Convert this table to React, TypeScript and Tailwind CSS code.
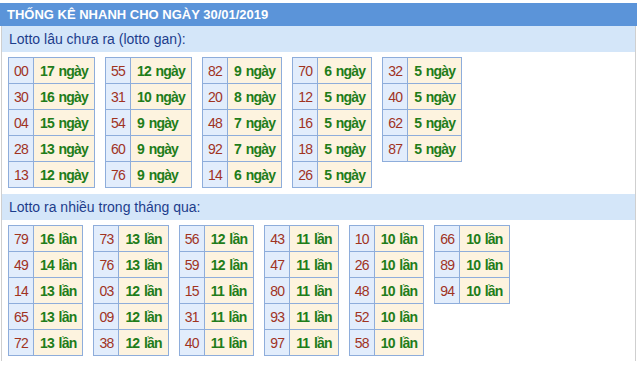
// Lotto quick stats panel: header bar, two titled sections of small number tables.

type Pair = [string, number];

const ganTables: Pair[][] = [
  [["00", 17], ["30", 16], ["04", 15], ["28", 13], ["13", 12]],
  [["55", 12], ["31", 10], ["54", 9], ["60", 9], ["76", 9]],
  [["82", 9], ["20", 8], ["48", 7], ["92", 7], ["14", 6]],
  [["70", 6], ["12", 5], ["16", 5], ["18", 5], ["26", 5]],
  [["32", 5], ["40", 5], ["62", 5], ["87", 5]],
];

const nhieuTables: Pair[][] = [
  [["79", 16], ["49", 14], ["14", 13], ["65", 13], ["72", 13]],
  [["73", 13], ["76", 13], ["03", 12], ["09", 12], ["38", 12]],
  [["56", 12], ["59", 12], ["15", 11], ["31", 11], ["40", 11]],
  [["43", 11], ["47", 11], ["80", 11], ["93", 11], ["97", 11]],
  [["10", 10], ["26", 10], ["48", 10], ["52", 10], ["58", 10]],
  [["66", 10], ["89", 10], ["94", 10]],
];

function StatTable({ rows, unit }: { rows: Pair[]; unit: string }) {
  return (
    <table className="border-collapse self-start text-[14px] tracking-[-0.8px] [word-spacing:1.5px]">
      <tbody>
        {rows.map(([num, count]) => (
          <tr key={num} className="h-[26px]">
            <td className="border border-[#8eaddb] bg-[#e2edfc] px-[5px] text-[#a0331f] leading-none">
              {num}
            </td>
            <td className="border border-[#8eaddb] bg-[#fdf3df] px-[6px] font-bold text-[#1f7d1a] leading-none whitespace-nowrap">
              {count} {unit}
            </td>
          </tr>
        ))}
      </tbody>
    </table>
  );
}

function SectionTitle({ children }: { children: string }) {
  return (
    <div className="h-[26px] bg-[#d4e6f9] pl-[7px] flex items-center text-[14px] text-[#1d3d8c]">
      {children}
    </div>
  );
}

function App() {
  return (
    <div className="w-[639px] h-[371px] bg-white pt-[3px] font-['Liberation_Sans',Arial,sans-serif] text-[13px]">
      {/* Header bar */}
      <div className="h-[23px] w-[637px] bg-[#5b94d9] pl-[7px] flex items-center text-white font-bold text-[13px]">
        THỐNG KÊ NHANH CHO NGÀY 30/01/2019
      </div>

      <div className="ml-[1px] w-[635px] border-x border-[#cfcfcf] pb-[5px]">
        <SectionTitle>Lotto lâu chưa ra (lotto gan):</SectionTitle>
        <div className="flex gap-[10px] pl-[6px] pt-[5px]">
          {ganTables.map((t, i) => (
            <StatTable key={i} rows={t} unit="ngày" />
          ))}
        </div>

        <div className="mt-[6px]">
          <SectionTitle>Lotto ra nhiều trong tháng qua:</SectionTitle>
        </div>
        <div className="flex gap-[10px] pl-[6px] pt-[5px]">
          {nhieuTables.map((t, i) => (
            <StatTable key={i} rows={t} unit="lần" />
          ))}
        </div>
      </div>
    </div>
  );
}

export default App;
